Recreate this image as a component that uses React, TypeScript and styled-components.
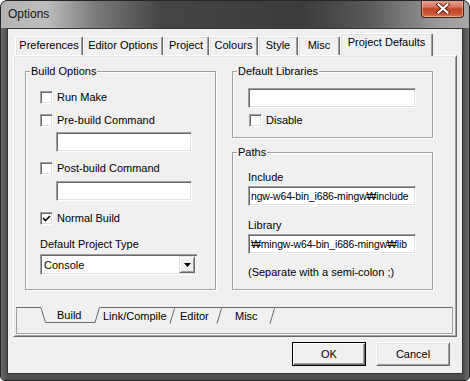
import React from 'react';
import styled, { createGlobalStyle } from 'styled-components';

const Global = createGlobalStyle`
  html, body { margin: 0; padding: 0; background: #ffffff; }
  body { font-family: "Liberation Sans", Arial, sans-serif; font-size: 11px; color: #000; }
  * { box-sizing: border-box; }
`;

const Window = styled.div`
  width: 470px;
  height: 381px;
  display: flex;
  flex-direction: column;
  border: 1px solid #262626;
  border-radius: 7px 7px 5px 5px;
  overflow: hidden;
  background: #555555;
`;

const TitleBar = styled.div`
  height: 27px;
  flex: none;
  display: flex;
  align-items: flex-start;
  justify-content: space-between;
  padding: 0 5px 0 7px;
  background: linear-gradient(90deg, #b3b3b3 0px, #bdbdbd 45px, #7a7a7a 95px, #454545 160px, #3b3b3b 300px, #5a5a5a 370px, #9c9c9c 440px, #a8a8a8 470px);
`;

const Title = styled.div`
  font-family: "Liberation Sans", Arial, sans-serif;
  font-size: 12px;
  color: #151515;
  line-height: 14px;
  margin-top: 6px;
`;

const CloseButton = styled.div`
  width: 43px;
  height: 18px;
  margin-top: -1px;
  border: 1px solid #4a2018;
  border-top: none;
  border-radius: 0 0 4px 4px;
  background: linear-gradient(180deg, #e9a796 0%, #d8775f 40%, #c3452a 52%, #c95333 80%, #d97a55 100%);
  box-shadow: inset 0 0 0 1px rgba(255, 220, 200, 0.45);
  display: flex;
  align-items: center;
  justify-content: center;
`;

const Frame = styled.div`
  flex: 1;
  display: flex;
  padding: 0 6px 6px 6px;
  background: linear-gradient(90deg, #6a6a6a 0, #4e4e4e 6px, #4e4e4e 462px, #6a6a6a 468px);
`;

const Client = styled.div`
  flex: 1;
  display: flex;
  flex-direction: column;
  background: #f0f0f0;
  border: 1px solid #333333;
  padding: 4px 5px 0 5px;
`;

const TabRow = styled.div`
  height: 22px;
  display: flex;
  align-items: flex-end;
  padding-left: 2px;
  position: relative;
  z-index: 1;
`;

const Tab = styled.div<{ $w: number; $active?: boolean }>`
  width: ${(p) => p.$w}px;
  height: ${(p) => (p.$active ? 23 : 19)}px;
  margin-bottom: ${(p) => (p.$active ? -1 : 0)}px;
  background: #f0f0f0;
  border-top: 1px solid #ffffff;
  border-left: 1px solid #ffffff;
  border-right: 1px solid #696969;
  border-radius: 2px 2px 0 0;
  box-shadow: inset -1px 0 0 #a0a0a0, inset 1px 1px 0 #e3e3e3;
  display: flex;
  align-items: center;
  justify-content: center;
  line-height: 13px;
  padding-bottom: ${(p) => (p.$active ? 5 : 2)}px;
  white-space: nowrap;
`;

const Panel = styled.div`
  height: 282px;
  border-top: 1px solid #ffffff;
  border-left: 1px solid #ffffff;
  border-right: 1px solid #696969;
  border-bottom: 1px solid #696969;
  box-shadow: inset 1px 1px 0 #e3e3e3, inset -1px -1px 0 #a0a0a0;
  display: flex;
  flex-direction: column;
  padding: 9px 0 0 11px;
`;

const Columns = styled.div`
  display: grid;
  grid-template-columns: 191px 201px;
  column-gap: 16px;
  height: 225px;
`;

const RightCol = styled.div`
  display: flex;
  flex-direction: column;
  gap: 8px;
`;

const Group = styled.fieldset<{ $h?: number }>`
  margin: 0;
  padding: 0 0 0 14px;
  min-width: 0;
  border: 1px solid #a0a0a0;
  box-shadow: inset 1px 1px 0 #ffffff, 1px 1px 0 #ffffff;
  ${(p) => (p.$h ? `height: ${p.$h}px; flex: none;` : 'flex: 1;')}
  display: flex;
  flex-direction: column;
  align-items: flex-start;
`;

const Legend = styled.legend`
  margin-left: -10px;
  padding: 0 1px;
  line-height: 13px;
  background: #f0f0f0;
`;

const CheckRow = styled.div<{ $mt: number; $ml?: number }>`
  display: flex;
  align-items: center;
  gap: 4px;
  height: 13px;
  margin-top: ${(p) => p.$mt}px;
  margin-left: ${(p) => p.$ml ?? 0}px;
  line-height: 13px;
`;

const Box = styled.div`
  width: 13px;
  height: 13px;
  flex: none;
  background: #ffffff;
  border: 1px solid;
  border-color: #a0a0a0 #ffffff #ffffff #a0a0a0;
  box-shadow: inset 1px 1px 0 #696969, inset -1px -1px 0 #e3e3e3;
  display: flex;
  align-items: center;
  justify-content: center;
`;

const TextField = styled.div<{ $w: number; $mt: number; $ml?: number }>`
  width: ${(p) => p.$w}px;
  height: 20px;
  flex: none;
  margin-top: ${(p) => p.$mt}px;
  margin-left: ${(p) => p.$ml ?? 0}px;
  background: #ffffff;
  border: 1px solid;
  border-color: #a0a0a0 #ffffff #ffffff #a0a0a0;
  box-shadow: inset 1px 1px 0 #696969, inset -1px -1px 0 #e3e3e3;
  padding: 0 1px 0 2px;
  display: flex;
  align-items: center;
  overflow: hidden;
  white-space: nowrap;
  font-size: 10.4px;
  letter-spacing: -0.1px;
`;

const Label = styled.div<{ $mt: number; $ml?: number }>`
  line-height: 13px;
  margin-top: ${(p) => p.$mt}px;
  margin-left: ${(p) => p.$ml ?? 0}px;
  white-space: nowrap;
`;

const Combo = styled.div`
  width: 158px;
  height: 21px;
  margin-top: 3px;
  background: #ffffff;
  border: 1px solid;
  border-color: #a0a0a0 #ffffff #ffffff #a0a0a0;
  box-shadow: inset 1px 1px 0 #696969, inset -1px -1px 0 #e3e3e3;
  display: flex;
  align-items: center;
  justify-content: space-between;
  padding: 2px 2px 2px 3px;
`;

const DropButton = styled.div`
  width: 16px;
  height: 17px;
  background: #f0f0f0;
  border: 1px solid;
  border-color: #e3e3e3 #696969 #696969 #e3e3e3;
  box-shadow: inset 1px 1px 0 #ffffff, inset -1px -1px 0 #a0a0a0;
  display: flex;
  align-items: center;
  justify-content: center;
`;

const SubTabStrip = styled.div`
  margin: 17px 3px 0 -9px;
  height: 27px;
  border-left: 1px solid #a0a0a0;
  border-top: 1px solid #696969;
  border-bottom: 1px solid #a0a0a0;
  border-right: 1px solid #a0a0a0;
  box-shadow: 0 1px 0 #ffffff;
  display: flex;
  align-items: flex-start;
  padding-left: 24px;
`;

const SubTab = styled.div<{ $w: number; $active?: boolean; $pl: number }>`
  position: relative;
  flex: none;
  width: ${(p) => p.$w}px;
  height: 16px;
  margin-top: ${(p) => (p.$active ? -1 : 0)}px;
  margin-right: -5px;
  display: flex;
  align-items: center;
  padding-left: ${(p) => p.$pl}px;
  line-height: 13px;
  background: ${(p) => (p.$active ? '#f0f0f0' : 'transparent')};
  z-index: ${(p) => (p.$active ? 1 : 0)};
  span { position: relative; }
`;

const TabShape = styled.svg`
  position: absolute;
  left: 0;
  top: 0;
  width: 100%;
  height: 100%;
  overflow: visible;
`;

const ButtonRow = styled.div`
  display: flex;
  justify-content: flex-end;
  gap: 10px;
  margin-top: 5px;
  padding-right: 7px;
`;

const Button = styled.div<{ $default?: boolean }>`
  width: 74px;
  height: 24px;
  display: flex;
  align-items: center;
  justify-content: center;
  background: #f0f0f0;
  border: 1px solid;
  border-color: ${(p) => (p.$default ? '#000000' : '#ffffff #696969 #696969 #ffffff')};
  box-shadow: ${(p) =>
    p.$default
      ? 'inset 1px 1px 0 #ffffff, inset -1px -1px 0 #696969, inset -2px -2px 0 #a0a0a0'
      : 'inset 1px 1px 0 #e3e3e3, inset -1px -1px 0 #a0a0a0'};
`;

const Check = () => (
  <svg width="9" height="9" viewBox="0 0 9 9">
    <path d="M1 4 L3.5 6.5 L8 2" stroke="#000" strokeWidth="1.7" fill="none" />
  </svg>
);

const CheckBox: React.FC<{ label: string; checked?: boolean; mt: number; ml?: number }> = ({ label, checked, mt, ml }) => (
  <CheckRow $mt={mt} $ml={ml}>
    <Box>{checked && <Check />}</Box>
    <span>{label}</span>
  </CheckRow>
);

const subTabs = [
  { name: 'Build', w: 59, pl: 16, active: true },
  { name: 'Link/Compile', w: 80, pl: 8 },
  { name: 'Editor', w: 52, pl: 10 },
  { name: 'Misc', w: 58, pl: 18 },
];

export default function App() {
  return (
    <>
      <Global />
      <Window>
        <TitleBar>
          <Title>Options</Title>
          <CloseButton>
            <svg width="14" height="11" viewBox="0 0 14 11">
              <path d="M2.5 1.5 L11.5 9.5 M11.5 1.5 L2.5 9.5" stroke="#5a1c10" strokeWidth="4" strokeLinecap="square" />
              <path d="M2.5 1.5 L11.5 9.5 M11.5 1.5 L2.5 9.5" stroke="#ffffff" strokeWidth="2.2" strokeLinecap="square" />
            </svg>
          </CloseButton>
        </TitleBar>
        <Frame>
          <Client>
            <TabRow>
              <Tab $w={68}>Preferences</Tab>
              <Tab $w={80}>Editor Options</Tab>
              <Tab $w={46}>Project</Tab>
              <Tab $w={49}>Colours</Tab>
              <Tab $w={40}>Style</Tab>
              <Tab $w={42}>Misc</Tab>
              <Tab $w={93} $active>Project Defaults</Tab>
            </TabRow>
            <Panel>
              <Columns>
                <Group>
                  <Legend>Build Options</Legend>
                  <CheckBox label="Run Make" mt={13} />
                  <CheckBox label="Pre-build Command" mt={10} />
                  <TextField $w={136} $mt={5} $ml={16} />
                  <CheckBox label="Post-build Command" mt={10} />
                  <TextField $w={136} $mt={6} $ml={16} />
                  <CheckBox label="Normal Build" checked mt={11} />
                  <Label $mt={13}>Default Project Type</Label>
                  <Combo>
                    <span>Console</span>
                    <DropButton>
                      <svg width="7" height="4" viewBox="0 0 7 4">
                        <path d="M0 0 H7 L3.5 4 Z" fill="#000" />
                      </svg>
                    </DropButton>
                  </Combo>
                </Group>
                <RightCol>
                  <Group $h={73}>
                    <Legend>Default Libraries</Legend>
                    <TextField $w={168} $mt={10} $ml={1} />
                    <CheckBox label="Disable" mt={6} ml={2} />
                  </Group>
                  <Group>
                    <Legend>Paths</Legend>
                    <Label $mt={12} $ml={1}>Include</Label>
                    <TextField $w={168} $mt={2} $ml={1}>ngw-w64-bin_i686-mingw₩include</TextField>
                    <Label $mt={13} $ml={1}>Library</Label>
                    <TextField $w={168} $mt={2} $ml={1}>₩mingw-w64-bin_i686-mingw₩lib</TextField>
                    <Label $mt={12} $ml={1}>(Separate with a semi-colon ;)</Label>
                  </Group>
                </RightCol>
              </Columns>
              <SubTabStrip>
                {subTabs.map((t) => (
                  <SubTab key={t.name} $w={t.w} $pl={t.pl} $active={t.active}>
                    <TabShape viewBox={`0 0 ${t.w} 16`} preserveAspectRatio="none">
                      {t.active ? (
                        <path d={`M0 0.5 L4.5 15.5 L${t.w - 5} 15.5 L${t.w - 0.5} 0.5`} stroke="#696969" fill="none" />
                      ) : (
                        <path d={`M${t.w - 5} 15.5 L${t.w - 0.5} 0.5`} stroke="#696969" fill="none" />
                      )}
                    </TabShape>
                    <span>{t.name}</span>
                  </SubTab>
                ))}
              </SubTabStrip>
            </Panel>
            <ButtonRow>
              <Button $default>OK</Button>
              <Button>Cancel</Button>
            </ButtonRow>
          </Client>
        </Frame>
      </Window>
    </>
  );
}
